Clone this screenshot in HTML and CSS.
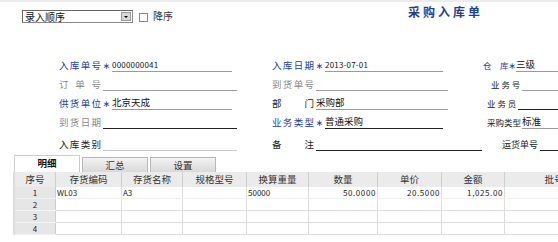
FILE: index.html
```html
<!DOCTYPE html>
<html lang="zh-CN">
<head>
    <meta charset="UTF-8">
    <title>采购入库单</title>
    <link rel="stylesheet" href="styles.css">
</head>
<body>
    <div class="topline"></div>
    <div class="toolbar">
        <div class="select">
            <span class="select-text">录入顺序</span>
            <span class="select-btn"><span class="arrow"></span></span>
        </div>
        <span class="check"></span>
        <span class="check-label">降序</span>
        <h1 class="title">采购入库单</h1>
    </div>

    <div class="form">
        <div class="field c1"><span class="label blue">入库单号</span><span class="star">∗</span><span class="value small">0000000041</span></div>
        <div class="field c2"><span class="label blue">入库日期</span><span class="star">∗</span><span class="value small">2013-07-01</span></div>
        <div class="field c3"><span class="label blue">仓　库</span><span class="star">∗</span><span class="value">三级</span></div>

        <div class="field c1"><span class="label gray">订 单 号</span><span class="value nostar"></span></div>
        <div class="field c2"><span class="label gray">到货单号</span><span class="value nostar"></span></div>
        <div class="field c3 in8"><span class="label">业 务 号</span><span class="value nostar"></span></div>

        <div class="field c1"><span class="label blue">供货单位</span><span class="star">∗</span><span class="value">北京天成</span></div>
        <div class="field c2"><span class="label">部　门</span><span class="value nostar">采购部</span></div>
        <div class="field c3 in4"><span class="label">业 务 员</span><span class="value nostar dark"></span></div>

        <div class="field c1"><span class="label gray">到货日期</span><span class="value nostar dark"></span></div>
        <div class="field c2"><span class="label blue">业务类型</span><span class="star">∗</span><span class="value dark">普通采购</span></div>
        <div class="field c3 in4"><span class="label">采购类型</span><span class="value nostar">标准</span></div>

        <div class="field c1"><span class="label">入库类别</span><span class="value nostar light"></span></div>
        <div class="field c2"><span class="label">备　　注</span><span class="value nostar dark long"></span></div>
        <div class="field c3 in18"><span class="label">运货单号</span><span class="value nostar dark"></span></div>
    </div>

    <div class="tabs">
        <span class="tab active">明细</span>
        <span class="tab">汇总</span>
        <span class="tab">设置</span>
    </div>

    <table class="grid">
        <tr>
            <th class="w-no">序号</th>
            <th class="w-code">存货编码</th>
            <th class="w-name">存货名称</th>
            <th class="w-spec">规格型号</th>
            <th class="w-conv">换算重量</th>
            <th class="w-qty">数量</th>
            <th class="w-price">单价</th>
            <th class="w-amt">金额</th>
            <th class="w-batch">批号</th>
        </tr>
        <tr>
            <td class="no">1</td>
            <td>WL03</td>
            <td>A3</td>
            <td></td>
            <td>50000</td>
            <td class="num">50.0000</td>
            <td class="num">20.5000</td>
            <td class="num">1,025.00</td>
            <td></td>
        </tr>
        <tr><td class="no">2</td><td></td><td></td><td></td><td></td><td></td><td></td><td></td><td></td></tr>
        <tr><td class="no">3</td><td></td><td></td><td></td><td></td><td></td><td></td><td></td><td></td></tr>
        <tr><td class="no">4</td><td></td><td></td><td></td><td></td><td></td><td></td><td></td><td></td></tr>
    </table>
</body>
</html>
```

FILE: styles.css
```css
body {
    margin: 0;
    background: #fff;
    font-family: "Noto Sans CJK SC", "DejaVu Sans", sans-serif;
    font-size: 10px;
    color: #222;
    width: 558px;
    overflow: hidden;
}
.topline {
    height: 2px;
    background: #ececec;
}
.toolbar {
    display: flex;
    align-items: flex-start;
    height: 38px;
    padding-left: 22px;
}
.select {
    display: flex;
    align-items: center;
    width: 109px;
    height: 11px;
    margin-top: 8px;
    border: 1px solid #888;
    border-top-color: #666;
    border-left-color: #666;
    background: #fff;
}
.select-text {
    flex: 1;
    padding-left: 2px;
    font-size: 10px;
    line-height: 11px;
    color: #111;
}
.select-btn {
    width: 10px;
    height: 9px;
    margin-right: 1px;
    background: #d8d8d8;
    border: 1px solid #999;
    box-sizing: border-box;
    display: flex;
    align-items: center;
    justify-content: center;
}
.arrow {
    width: 0;
    height: 0;
    border-left: 2px solid transparent;
    border-right: 2px solid transparent;
    border-top: 2px solid #000;
}
.check {
    width: 7px;
    height: 7px;
    margin: 11px 0 0 6px;
    border: 1px solid #888;
    background: #fff;
}
.check-label {
    margin: 7px 0 0 5px;
    font-size: 10px;
    line-height: 14px;
    color: #333;
}
.title {
    margin: 3px 0 0 235px;
    font-size: 12px;
    line-height: 14px;
    font-weight: bold;
    letter-spacing: 3px;
    color: #1f3f8f;
}
.form {
    display: grid;
    grid-template-columns: 213px 211px 75px;
    grid-template-rows: 19px 19px 19px 19px 22px;
    padding-left: 59px;
    padding-top: 13px;
    font-size: 9.5px;
}
.field {
    display: flex;
    align-items: flex-end;
    white-space: nowrap;
}
.label {
    width: 42px;
    text-align: justify;
    text-align-last: justify;
    line-height: 13px;
    color: #222;
}
.label.blue {
    color: #23409a;
}
.label.gray {
    color: #8a8a8a;
}
.star {
    width: 11px;
    text-align: center;
    color: #23409a;
    font-size: 9px;
    line-height: 13px;
}
.value {
    width: 120px;
    line-height: 13px;
    height: 13px;
    border-bottom: 1px solid #9a9a9a;
    color: #111;
}
.value.small {
    font-size: 8px;
    letter-spacing: 0.2px;
}
.value.nostar {
    width: 134px;
    margin-left: 2px;
}
.value.dark {
    border-bottom-color: #222;
}
.value.light {
    border-bottom-color: #c8c8c8;
}
.c2 .value {
    width: 118px;
}
.c2 .value.nostar {
    width: 132px;
}
.c2 .value.long {
    width: 166px;
}
.c3 {
    font-size: 8.5px;
}
.c3 .label {
    width: 33px;
}
.c3 .star {
    width: 14px;
}
.c3 .value {
    font-size: 9.5px;
}
.c3.in4 {
    padding-left: 4px;
}
.c3.in8 {
    padding-left: 8px;
}
.c3.in18 {
    padding-left: 19px;
}
.c3.in18 .label {
    width: 38px;
    font-size: 9px;
}
.tabs {
    display: flex;
    gap: 2px;
    margin: 4px 0 0 14px;
    height: 17px;
    align-items: flex-end;
}
.tab {
    width: 64px;
    height: 14px;
    line-height: 14px;
    text-align: center;
    font-size: 9.5px;
    color: #333;
    background: linear-gradient(#f2f2f2, #d9d9d9);
    border: 1px solid #b8b8b8;
    border-bottom: none;
}
.tab.active {
    height: 16px;
    line-height: 15px;
    background: #fff;
    font-weight: bold;
    color: #111;
    border-color: #ccc;
}
.grid {
    margin-left: 13px;
    border-collapse: collapse;
    table-layout: fixed;
    width: 580px;
    font-size: 9px;
    border-left: 2px solid #ddd;
}
.grid th {
    height: 15px;
    background: #ebebeb;
    font-weight: normal;
    color: #333;
    border-right: 1px solid #cfcfcf;
    padding: 0;
    line-height: 15px;
    font-size: 9.5px;
}
.grid td {
    height: 11px;
    padding: 0 1px;
    line-height: 10px;
    font-size: 8px;
    border-right: 1px solid #dcdcdc;
    border-bottom: 1px solid #dcdcdc;
    overflow: hidden;
    white-space: nowrap;
}
.grid tr:nth-child(2) td {
    border-bottom-color: #f0f0f0;
}
.grid td.no {
    background: #e6e6e6;
    text-align: center;
    border-right: 1px solid #ccc;
    border-bottom: 1px solid #f4f4f4;
}
.grid td.num {
    text-align: right;
    letter-spacing: 0.6px;
}
.w-no { width: 40px; }
.w-code { width: 65px; }
.w-name { width: 60px; }
.w-spec { width: 63px; }
.w-conv { width: 61px; }
.w-qty { width: 68px; }
.w-price { width: 63px; }
.w-amt { width: 62px; }
.w-batch { width: 98px; }
```
